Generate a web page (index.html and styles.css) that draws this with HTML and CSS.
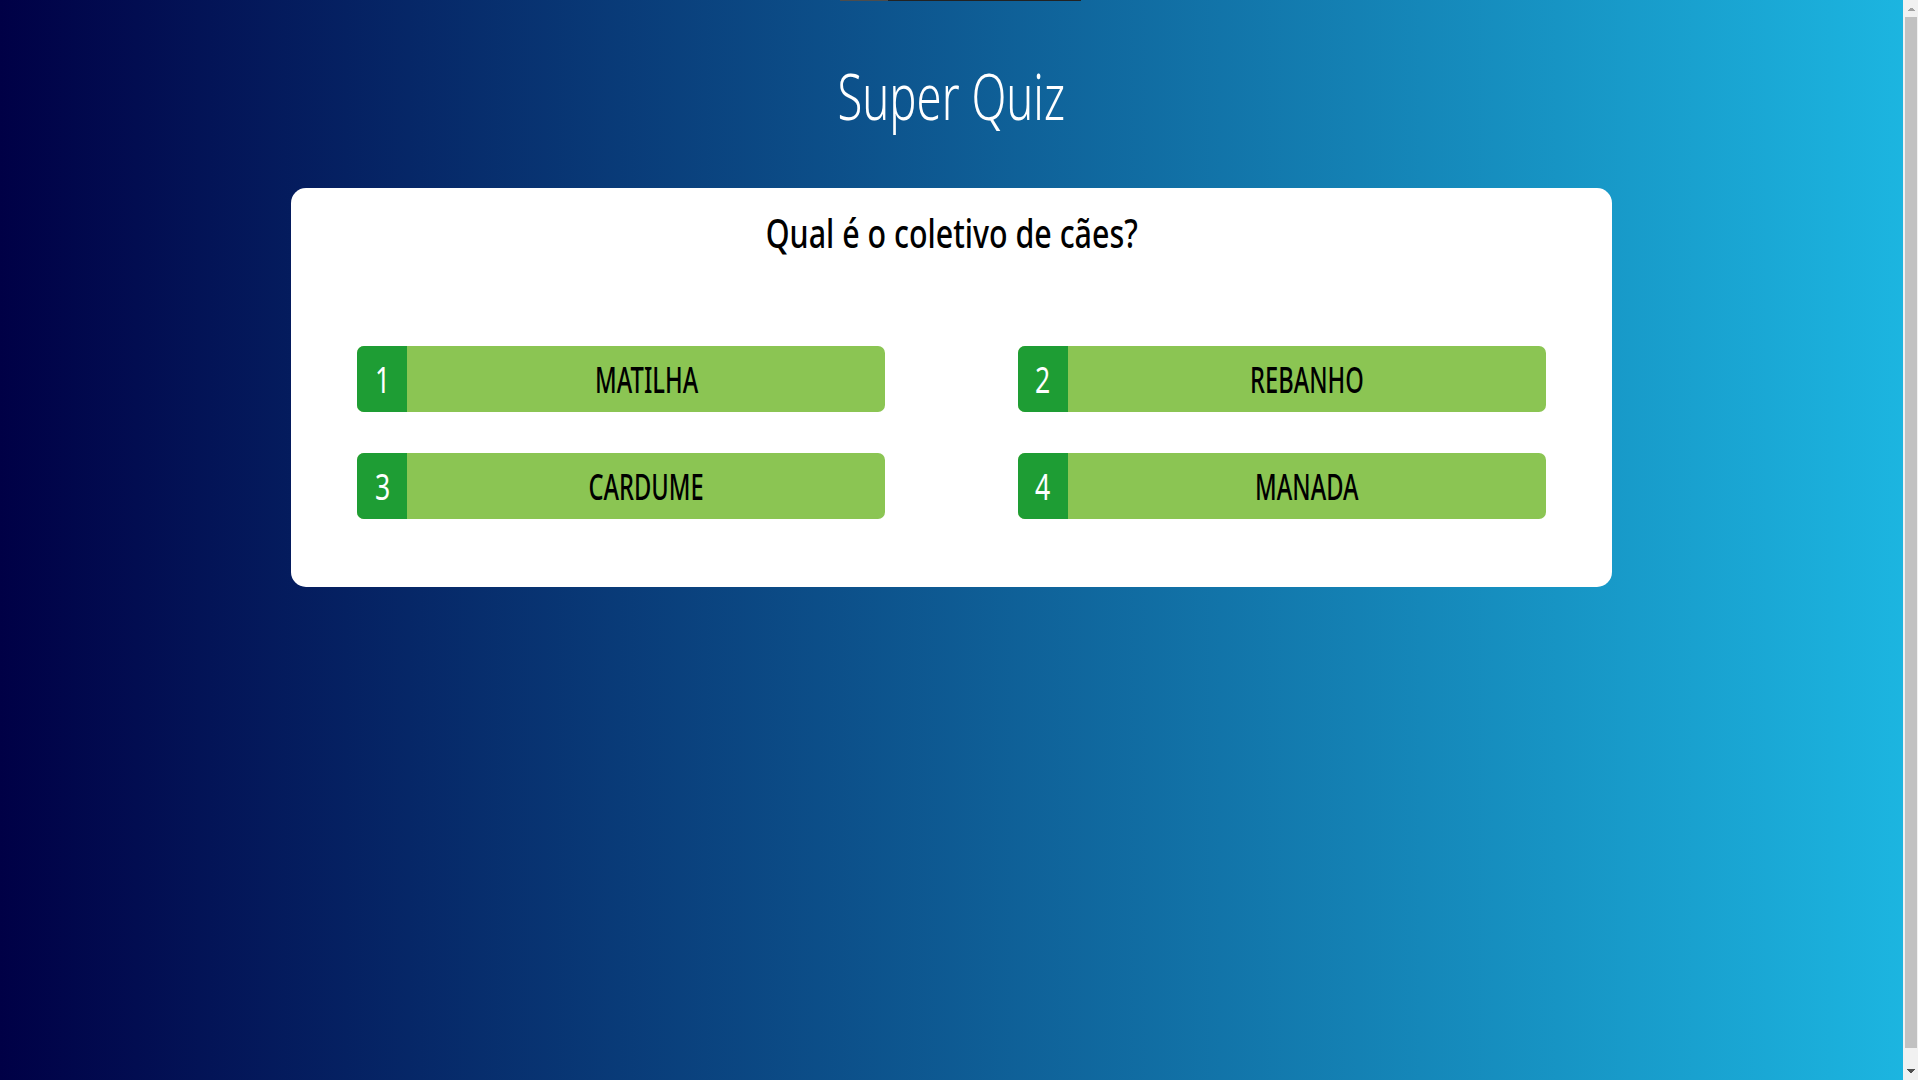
FILE: index.html
```html
<!DOCTYPE html>
<html lang="pt-BR">
<head>
<meta charset="utf-8">
<title>Super Quiz</title>
<link rel="stylesheet" href="styles.css">
</head>
<body>
  <div class="progress"><span class="progress-done"></span><span class="progress-rest"></span></div>
  <h1 class="title"><span class="squeeze">Super Quiz</span></h1>
  <main class="card">
    <h2 class="question"><span class="squeeze">Qual é o coletivo de cães?</span></h2>
    <div class="answers">
      <button class="answer"><span class="num"><span class="squeeze">1</span></span><span class="label"><span class="squeeze">MATILHA</span></span></button>
      <button class="answer"><span class="num"><span class="squeeze">2</span></span><span class="label"><span class="squeeze">REBANHO</span></span></button>
      <button class="answer"><span class="num"><span class="squeeze">3</span></span><span class="label"><span class="squeeze">CARDUME</span></span></button>
      <button class="answer"><span class="num"><span class="squeeze">4</span></span><span class="label"><span class="squeeze">MANADA</span></span></button>
    </div>
  </main>
  <div class="scrollbar" aria-hidden="true">
    <span class="sb-arrow sb-up"></span>
    <span class="sb-thumb"></span>
    <span class="sb-arrow sb-down"></span>
  </div>
</body>
</html>
```
FILE: styles.css
```css
html {
  width: calc(100% - 15px);
  background: linear-gradient(to right, #000046, #1cb5e0);
}
body {
  margin: 0;
  padding: 8px;
  min-height: 100vh;
  font-family: "Noto Sans", "DejaVu Sans", sans-serif;
  position: relative;
}
.squeeze {
  display: inline-block;
  transform: scaleX(0.75);
}
.progress {
  position: absolute;
  top: 0;
  left: 840px;
  width: 241px;
  height: 1px;
  display: flex;
}
.progress-done { width: 48px; background: #4d4d4d; }
.progress-rest { flex: 1; background: #222; }
.title {
  margin: 48px 0 0;
  text-align: center;
  color: #fff;
  font-weight: 300;
  font-size: 64px;
  line-height: 80px;
}
.title .squeeze { transform: scaleX(0.71); }
.card {
  width: 70%;
  margin: 52px auto 0;
  background: #fff;
  border-radius: 15px;
  padding: 20px 0 68px;
}
.question {
  margin: 0;
  text-align: center;
  font-weight: 500;
  font-size: 40px;
  line-height: 50px;
  color: #000;
}
.question .squeeze { transform: scaleX(0.76); }
.answers {
  margin-top: 88px;
  display: flex;
  flex-wrap: wrap;
  justify-content: space-around;
  row-gap: 41px;
}
.answer {
  width: 40%;
  height: 66px;
  display: flex;
  padding: 0;
  border: 0;
  border-radius: 7px;
  overflow: hidden;
  background: #8bc553;
  font-family: inherit;
  font-weight: 500;
  font-size: 37px;
  line-height: 66px;
  cursor: pointer;
}
.num {
  width: 50px;
  flex: none;
  background: #1e9d34;
  color: #fff;
  text-align: center;
}
.num .squeeze { transform: scaleX(0.72); font-weight: 400; }
.label {
  flex: 1;
  color: #000;
  text-align: center;
}
.label .squeeze { transform: scaleX(0.64); }

.scrollbar {
  position: fixed;
  top: 0;
  right: 0;
  width: 15px;
  height: 100vh;
  background: #f1f1f1;
  display: flex;
  flex-direction: column;
  align-items: center;
}
.sb-arrow {
  flex: none;
  width: 15px;
  height: 17px;
  background-repeat: no-repeat;
  background-size: 8px 4px;
}
.sb-up {
  background-image: conic-gradient(from 135deg at 50% 0, #a3a3a3 90deg, transparent 0);
  background-position: 4px 7px;
}
.sb-down {
  background-image: conic-gradient(from -45deg at 50% 100%, #505050 90deg, transparent 0);
  background-position: 4px 6px;
}
.sb-thumb {
  flex: 1;
  align-self: stretch;
  margin: 0 1px 15px 2px;
  background: #c1c1c1;
}
```
